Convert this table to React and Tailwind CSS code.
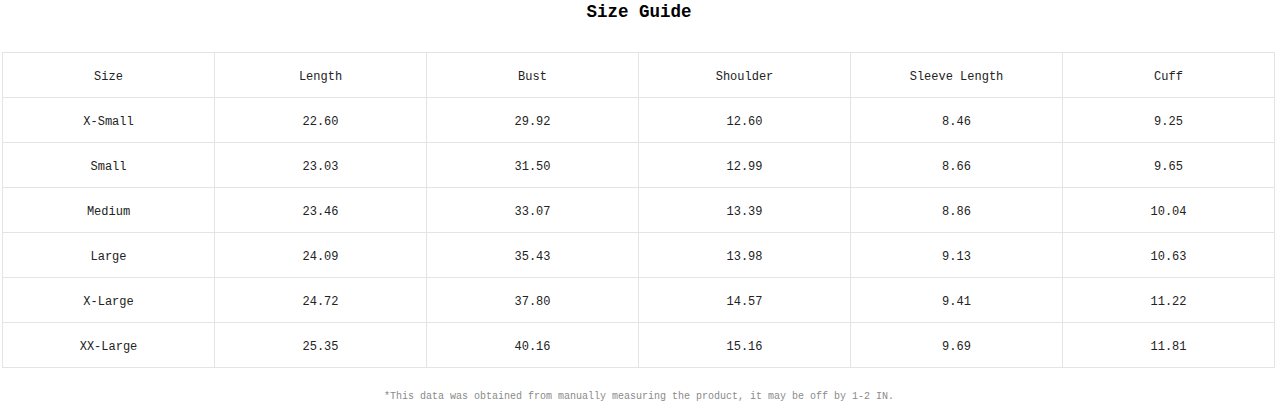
export default function App() {
  const headers = ["Size", "Length", "Bust", "Shoulder", "Sleeve Length", "Cuff"];
  const rows = [
    ["X-Small", "22.60", "29.92", "12.60", "8.46", "9.25"],
    ["Small", "23.03", "31.50", "12.99", "8.66", "9.65"],
    ["Medium", "23.46", "33.07", "13.39", "8.86", "10.04"],
    ["Large", "24.09", "35.43", "13.98", "9.13", "10.63"],
    ["X-Large", "24.72", "37.80", "14.57", "9.41", "11.22"],
    ["XX-Large", "25.35", "40.16", "15.16", "9.69", "11.81"],
  ];
  return (
    <div className="w-[1278px] h-[403px] bg-white text-[#222]" style={{ fontFamily: '"Liberation Mono", monospace' }}>
      <div className="h-[24px] pt-[1px] text-center text-[17.5px] font-bold leading-[22px] text-black">Size Guide</div>
      <div className="pt-[28px] pl-[2px] pr-[3px]">
        <table className="w-[1273px] border-collapse table-fixed border border-[#e4e4e4]">
          <tbody>
            {[headers, ...rows].map((r, i) => (
              <tr key={i} className="h-[45px]">
                {r.map((c, j) => (
                  <td key={j} className="border border-[#e4e4e4] text-center align-middle text-[12px] leading-[14px] pt-[3px] pb-0 px-0">
                    {c}
                  </td>
                ))}
              </tr>
            ))}
          </tbody>
        </table>
      </div>
      <div className="pt-[23px] text-center text-[10px] leading-[12px] text-[#8a8a8a]">
        *This data was obtained from manually measuring the product, it may be off by 1-2 IN.
      </div>
    </div>
  );
}
